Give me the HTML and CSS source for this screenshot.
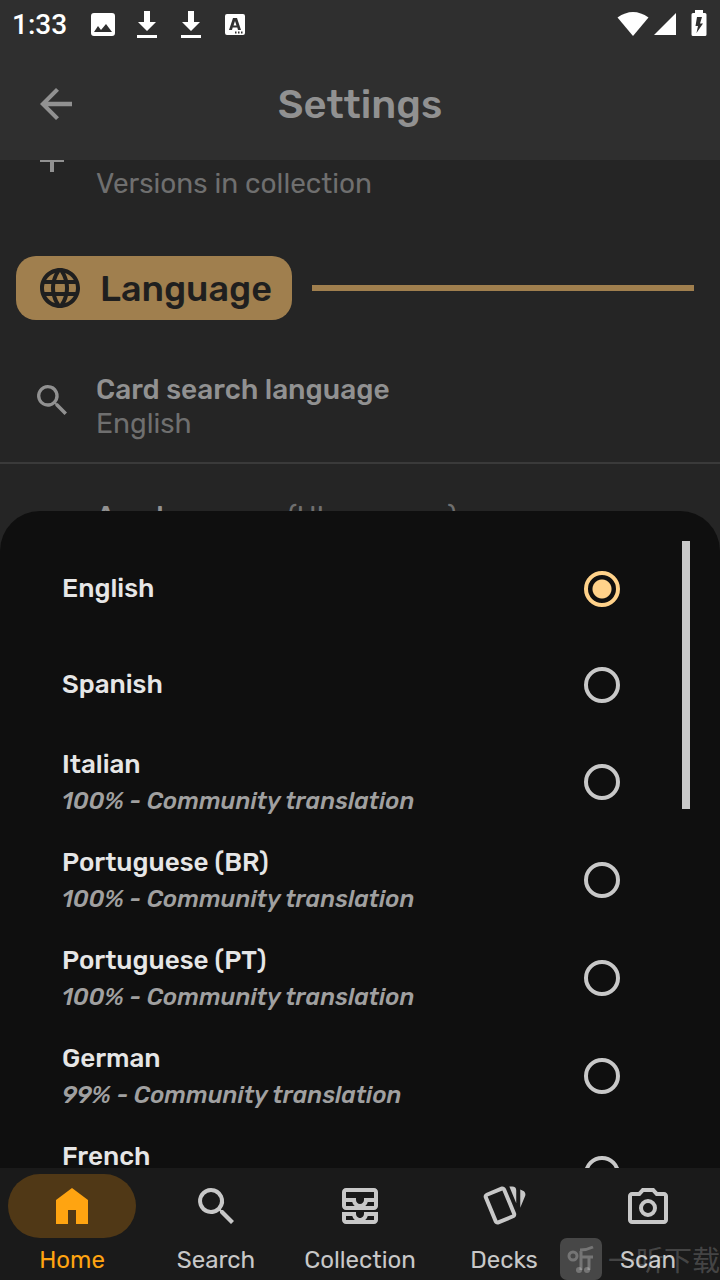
FILE: index.html
```
<!DOCTYPE html>
<html lang="en">

<head>
    <meta charset="UTF-8">
    <meta name="viewport" content="width=device-width, initial-scale=1.0">
    <title>Settings</title>
    <link rel="stylesheet" href="styles.css">
</head>

<body>

    <!-- Status bar -->
    <div class="status-bar">
        <span class="clock">1:33</span>
        <svg class="status-icon" viewBox="0 0 28 28"><path fill-rule="evenodd" d="M5 3h18q3 0 3 3v17q0 3-3 3H5q-3 0-3-3V6q0-3 3-3zm0 19h18l-6-8-5 6-3-4z"/></svg>
        <svg class="status-icon" viewBox="0 0 28 28"><path d="M11 1h6v11h6l-9 9-9-9h6zM4 25h20v3H4z"/></svg>
        <svg class="status-icon" viewBox="0 0 28 28"><path d="M11 1h6v11h6l-9 9-9-9h6zM4 25h20v3H4z"/></svg>
        <svg class="status-icon" viewBox="0 0 28 28"><path fill-rule="evenodd" d="M6 4h16q2 0 2 2v17q0 2-2 2H6q-2 0-2-2V6q0-2 2-2zm6 4L8 20h3l.7-2.500h4.600L17 20h3L16 8zM14 11l1.500 4.500h-3zM14 21.500v2h1.500v-2zm3 0v2h1.500v-2zm3 0v2h1.500v-2z"/></svg>
        <span class="status-space"></span>
        <svg class="status-wifi" viewBox="0 0 32 26"><path d="M16 25 .5 6.500Q16-4.500 31.500 6.500z"/></svg>
        <svg class="status-signal" viewBox="0 0 24 24"><path d="M23 1v22H1z"/></svg>
        <svg class="status-battery" viewBox="0 0 16 28"><path fill-rule="evenodd" d="M4 0h8v3h2q1.500 0 1.500 1.500V24.500q0 1.500-1.500 1.500H2Q.5 26 .5 24.500V4.500Q.5 3 2 3h2zm2 7-1.500 9H7l-1.500 7L12 13.500H9L11 7z"/></svg>
    </div>

    <header class="app-header">
        <button class="back-button" aria-label="Back">
            <svg class="icon" viewBox="0 0 24 24"><path d="M20 10.900H8l5.500-5.500L12 4l-8 8 8 8 1.500-1.400L8 13.100h12z"/></svg>
        </button>
        <h1>Settings</h1>
    </header>

    <main class="content">
        <div class="setting setting-cut">
            <svg class="setting-icon" viewBox="0 0 40 40"><path d="M8 0h24v2h-10v10h-4V2H8z"/></svg>
            <div class="setting-value">Versions in collection</div>
        </div>

        <div class="section-heading">
            <h2>
                <svg class="icon" viewBox="0 0 24 24"><path d="M11.990 2C6.470 2 2 6.480 2 12s4.470 10 9.990 10C17.520 22 22 17.520 22 12S17.520 2 11.990 2zm6.930 6h-2.950c-.32-1.250-.78-2.450-1.380-3.560 1.840.63 3.370 1.910 4.330 3.560zM12 4.040c.83 1.200 1.480 2.530 1.910 3.960h-3.820c.43-1.430 1.080-2.760 1.910-3.960zM4.260 14C4.100 13.360 4 12.690 4 12s.1-1.360.26-2h3.380c-.08.66-.14 1.320-.14 2 0 .68.06 1.340.14 2H4.260zm.82 2h2.950c.32 1.250.78 2.450 1.380 3.560-1.840-.63-3.370-1.900-4.330-3.560zm2.950-8H5.080c.96-1.660 2.490-2.930 4.330-3.560C8.810 5.550 8.350 6.750 8.030 8zM12 19.960c-.83-1.200-1.480-2.530-1.910-3.960h3.820c-.43 1.430-1.080 2.760-1.910 3.960zM14.340 14H9.660c-.09-.66-.16-1.320-.16-2 0-.68.07-1.350.16-2h4.680c.09.65.16 1.320.16 2 0 .68-.07 1.340-.16 2zm.25 5.560c.6-1.110 1.060-2.310 1.380-3.560h2.950c-.96 1.650-2.490 2.930-4.330 3.560zM16.360 14c.08-.66.14-1.320.14-2 0-.68-.06-1.340-.14-2h3.380c.16.64.26 1.310.26 2s-.1 1.360-.26 2h-3.380z"/></svg>
                Language
            </h2>
            <div class="section-line"></div>
        </div>

        <div class="setting">
            <svg class="setting-icon" viewBox="0 0 24 24"><path d="M9.500 3a6.500 6.500 0 0 1 4.940 10.730l.27.270h.79l5.500 5.500-1.500 1.500-5.500-5.500v-.79l-.27-.27A6.500 6.500 0 1 1 9.500 3m0 2a4.500 4.500 0 1 0 0 9 4.500 4.500 0 0 0 0-9"/></svg>
            <div>
                <div class="setting-name">Card search language</div>
                <div class="setting-value">English</div>
            </div>
        </div>
        <div class="setting">
            <div class="setting-icon"></div>
            <div class="setting-name">App language <span class="setting-value">(UI, menus...)</span></div>
        </div>

        <!-- Language picker -->
        <div class="sheet">
            <form class="language-list">
                <label class="language">
                    <span class="language-name">English</span>
                    <input type="radio" name="language" checked>
                </label>
                <label class="language">
                    <span class="language-name">Spanish</span>
                    <input type="radio" name="language">
                </label>
                <label class="language">
                    <span class="language-name">Italian <small>100% - Community translation</small></span>
                    <input type="radio" name="language">
                </label>
                <label class="language">
                    <span class="language-name">Portuguese (BR) <small>100% - Community translation</small></span>
                    <input type="radio" name="language">
                </label>
                <label class="language">
                    <span class="language-name">Portuguese (PT) <small>100% - Community translation</small></span>
                    <input type="radio" name="language">
                </label>
                <label class="language">
                    <span class="language-name">German <small>99% - Community translation</small></span>
                    <input type="radio" name="language">
                </label>
                <label class="language">
                    <span class="language-name">French <small>99% - Community translation</small></span>
                    <input type="radio" name="language">
                </label>
            </form>
            <div class="scroll-thumb"></div>
        </div>
    </main>

    <nav class="tab-bar">
        <a href="#home" class="tab active">
            <span class="tab-icon"><svg class="icon" viewBox="0 0 24 24"><path d="M12 3l8 6v12h-6v-7h-4v7H4V9z"/></svg></span>
            Home
        </a>
        <a href="#search" class="tab">
            <span class="tab-icon"><svg class="icon" viewBox="0 0 24 24"><path d="M9.500 3a6.500 6.500 0 0 1 4.940 10.730l.27.270h.79l5.500 5.500-1.500 1.500-5.500-5.500v-.79l-.27-.27A6.500 6.500 0 1 1 9.500 3m0 2a4.500 4.500 0 1 0 0 9 4.500 4.500 0 0 0 0-9"/></svg></span>
            Search
        </a>
        <a href="#collection" class="tab">
            <span class="tab-icon"><svg class="icon" viewBox="0 0 24 24"><path d="M19 3H5c-1.100 0-2 .9-2 2v7c0 1.100.9 2 2 2h14c1.100 0 2-.9 2-2V5c0-1.100-.9-2-2-2zM5 10h3.130c.21.78.67 1.470 1.270 2H5v-2zm14 2h-4.400c.6-.53 1.060-1.220 1.270-2H19v2zm0-4h-5v1c0 1.070-.93 2-2 2s-2-.93-2-2V8H5V5h14v3zm-5 7v1c0 .47-.19.9-.48 1.250-.37.45-.92.75-1.520.75s-1.150-.3-1.520-.75c-.29-.35-.48-.78-.48-1.250v-1H3v4c0 1.100.9 2 2 2h14c1.100 0 2-.9 2-2v-4h-7zm-9 2h3.130c.02.09.06.17.09.25.24.68.65 1.280 1.180 1.750H5v-2zm14 2h-4.400c.54-.47.95-1.070 1.180-1.750.03-.08.07-.17.09-.25H19v2z"/></svg></span>
            Collection
        </a>
        <a href="#decks" class="tab">
            <span class="tab-icon"><svg class="icon" viewBox="0 0 24 24"><path fill-rule="evenodd" d="M11.190 2.250C10.930 2.250 10.670 2.310 10.420 2.400L3.060 5.450C2.040 5.870 1.550 7.040 1.970 8.050L6.930 20C7.240 20.770 7.970 21.230 8.740 21.250C9 21.250 9.270 21.220 9.530 21.100L16.900 18.050C17.650 17.740 18.110 17 18.130 16.250C18.140 16 18.090 15.710 18 15.450L13 3.500C12.710 2.730 11.970 2.260 11.190 2.250M14.670 2.250L18.120 10.600V4.250A2 2 0 0 0 16.120 2.250M20.130 3.790V12.820L22.560 6.960C22.970 5.940 22.500 4.780 21.470 4.360M11.190 4.220L16.170 16.240L8.780 19.300L3.800 7.290"/></svg></span>
            Decks
        </a>
        <a href="#scan" class="tab">
            <span class="tab-icon"><svg class="icon" viewBox="0 0 24 24"><path fill-rule="evenodd" d="M20 5h-3.170L15 3H9L7.170 5H4c-1.100 0-2 .9-2 2v12c0 1.100.9 2 2 2h16c1.100 0 2-.9 2-2V7c0-1.100-.9-2-2-2zm0 14H4V7h4.050l1.830-2h4.240l1.830 2H20zM12 8.500a4.500 4.500 0 1 0 0 9 4.500 4.500 0 0 0 0-9zm0 2a2.500 2.500 0 1 1 0 5 2.500 2.500 0 0 1 0-5z"/></svg></span>
            Scan
        </a>
        <div class="watermark">
            <svg class="watermark-logo" viewBox="0 0 42 42">
                <rect width="42" height="42" rx="7"/>
                <g class="watermark-lines">
                    <circle cx="13" cy="18" r="4"/>
                    <path d="M21 32V13M20 12q7 0 13-3M21 19h12M29 19v13"/>
                    <circle cx="19" cy="32" r="1.500"/>
                    <circle cx="27" cy="32" r="1.500"/>
                </g>
            </svg>
            <span>一听下载</span>
        </div>
    </nav>

</body>

</html>
```
FILE: styles.css
```
* {
    box-sizing: border-box;
}

body {
    margin: 0;
    height: 100vh;
    display: flex;
    flex-direction: column;
    overflow: hidden;
    background-color: #252525;
    color: #919191;
    font-family: Rubik, Roboto, sans-serif;
    font-size: 28px;
}

svg {
    display: block;
    flex-shrink: 0;
    fill: currentColor;
}

.icon {
    width: 48px;
    height: 48px;
}

/* Status bar */
.status-bar {
    display: flex;
    align-items: center;
    height: 48px;
    padding: 0 13px 0 12px;
    background-color: #2f2f2f;
    color: white;
}

.clock {
    font-family: Roboto, sans-serif;
    font-weight: 500;
    margin-right: 6px;
}

.status-icon {
    width: 28px;
    height: 28px;
    margin-left: 16px;
}

.status-space {
    flex: 1;
}

.status-wifi {
    width: 32px;
    height: 26px;
}

.status-signal {
    width: 24px;
    height: 24px;
    margin: 0 14px 0 4px;
}

.status-battery {
    width: 16px;
    height: 28px;
}

/* Header */
.app-header {
    display: grid;
    grid-template-columns: 48px 1fr 48px;
    align-items: center;
    height: 112px;
    padding: 0 32px;
    background-color: #2f2f2f;
}

.back-button {
    padding: 0;
    border: none;
    background: none;
    color: inherit;
    cursor: pointer;
}

h1 {
    margin: 0;
    font-size: 40px;
    font-weight: 500;
    text-align: center;
}

/* Settings list */
.content {
    flex: 1;
    min-height: 0;
    position: relative;
    overflow: hidden;
}

.setting {
    display: flex;
    align-items: flex-start;
    gap: 24px;
    padding: 36px 32px 21px;
    line-height: 34px;
    border-bottom: 2px solid #3a3a3a;
}

.setting-icon {
    width: 40px;
    height: 40px;
    margin-top: 7px;
}

.setting-name {
    font-weight: 500;
}

.setting-value {
    color: #6f6f6f;
    font-weight: 400;
}

.setting-cut {
    height: 96px;
    padding-top: 0;
    border-bottom: none;
}

.setting-cut .setting-icon {
    margin-top: 0;
}

.setting-cut .setting-value {
    padding-top: 7px;
}

.section-heading {
    display: flex;
    align-items: center;
    gap: 20px;
    margin: 0 26px 17px 16px;
}

h2 {
    display: flex;
    align-items: center;
    gap: 16px;
    height: 64px;
    margin: 0;
    padding: 0 20px;
    border-radius: 20px;
    background-color: #a07f4e;
    color: #1f1f1f;
    font-size: 36px;
    font-weight: 500;
}

.section-line {
    flex: 1;
    height: 6px;
    background-color: #a07f4e;
}

/* Language picker */
.sheet {
    position: absolute;
    top: 351px;
    right: 0;
    bottom: 0;
    left: 0;
    overflow: hidden;
    padding-top: 30px;
    border-radius: 40px 40px 0 0;
    background-color: #0f0f0f;
}

.language {
    display: flex;
    align-items: center;
    justify-content: space-between;
    min-height: 96px;
    padding: 13px 100px 13px 62px;
    cursor: pointer;
}

.language-name {
    color: #e6e6e6;
    font-size: 26px;
    font-weight: 500;
    line-height: 38px;
}

.language-name small {
    display: block;
    color: #a0a0a0;
    font-size: 24px;
    font-style: italic;
    line-height: 34px;
}

.language input {
    appearance: none;
    width: 36px;
    height: 36px;
    margin: 0;
    border: 4px solid #c8c8c8;
    border-radius: 50%;
}

.language input:checked {
    border-color: #ffd28a;
    background: radial-gradient(circle, #ffd28a 9px, transparent 10px);
}

.scroll-thumb {
    position: absolute;
    top: 30px;
    right: 30px;
    width: 8px;
    height: 268px;
    background-color: #c8c8c8;
}

/* Tab bar */
.tab-bar {
    position: relative;
    display: grid;
    grid-template-columns: repeat(5, 1fr);
    height: 112px;
    padding-top: 6px;
    background-color: #1a1a1a;
}

.tab {
    display: flex;
    flex-direction: column;
    padding: 0 8px;
    color: #c8c8c8;
    font-size: 24px;
    line-height: 44px;
    text-align: center;
    text-decoration: none;
}

.tab-icon {
    display: flex;
    align-items: center;
    justify-content: center;
    height: 64px;
    border-radius: 32px;
}

.tab.active {
    color: #ffa411;
}

.tab.active .tab-icon {
    background-color: #503816;
}

.watermark {
    position: absolute;
    right: 0;
    bottom: 0;
    display: flex;
    align-items: center;
    gap: 6px;
    color: rgba(255, 255, 255, 0.2);
    font-family: "Noto Sans CJK SC", sans-serif;
    line-height: 42px;
    pointer-events: none;
}

.watermark-logo {
    width: 42px;
    height: 42px;
}

.watermark-lines {
    fill: none;
    stroke: rgba(255, 255, 255, 0.25);
    stroke-width: 3;
}
```
